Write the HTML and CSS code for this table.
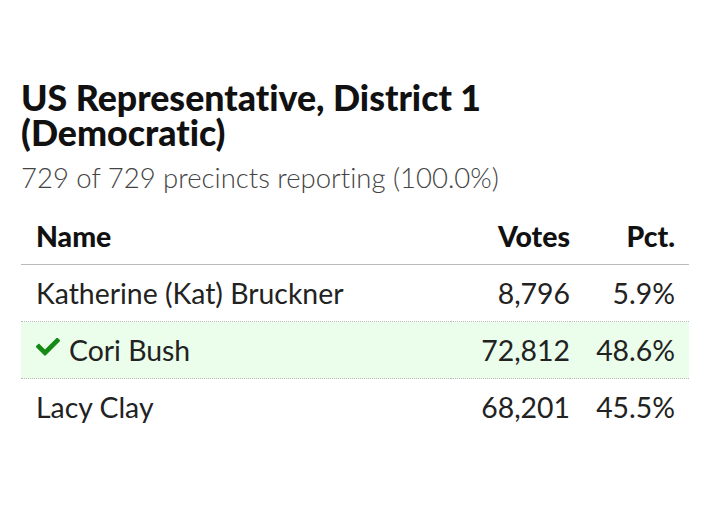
FILE: index.html
```html
<!DOCTYPE html>
<html>
<head>
<meta charset="utf-8">
<link rel="stylesheet" href="styles.css">
</head>
<body>
<div class="race">
  <h1 class="title">US Representative, District 1 (Democratic)</h1>
  <p class="reporting">729 of 729 precincts reporting (100.0%)</p>
  <table class="results">
    <thead>
      <tr><th class="name">Name</th><th class="num">Votes</th><th class="num pct">Pct.</th></tr>
    </thead>
    <tbody>
      <tr><td class="name">Katherine (Kat) Bruckner</td><td class="num">8,796</td><td class="num pct">5.9%</td></tr>
      <tr class="winner"><td class="name"><svg class="check" viewBox="0 72 512 378" width="24" height="18"><path fill="#138a13" d="M173.9 439.4L7.5 273c-10-10-10-26.2 0-36.2l36.2-36.2c10-10 26.2-10 36.2 0L192 312.7 432.1 72.6c10-10 26.2-10 36.2 0l36.2 36.2c10 10 10 26.2 0 36.2L210.1 439.4c-10 10-26.2 10-36.2 0z"/></svg>Cori Bush</td><td class="num">72,812</td><td class="num pct">48.6%</td></tr>
      <tr><td class="name">Lacy Clay</td><td class="num">68,201</td><td class="num pct">45.5%</td></tr>
    </tbody>
  </table>
</div>
</body>
</html>
```
FILE: styles.css
```css
html, body {
  margin: 0;
  padding: 0;
  background: #fff;
}
body {
  font-family: Lato, "Liberation Sans", sans-serif;
  font-variant-ligatures: none;
  color: #1a1a1a;
}
.race {
  width: 668px;
  margin-left: 21px;
  padding-top: 80px;
}
.title {
  margin: 0;
  font-size: 35.7px;
  line-height: 35px;
  font-weight: 900;
  color: #111;
  width: 560px;
}
.reporting {
  margin: 11px 0 0;
  font-size: 27.5px;
  line-height: 34px;
  font-weight: 300;
  color: #444;
}
.results {
  width: 100%;
  border-collapse: collapse;
  margin-top: 13px;
  font-size: 28.4px;
}
.results th {
  font-weight: 900;
  text-align: left;
  height: 56px;
  padding: 0 0 0 15px;
  border-bottom: 1px solid #bbb;
  color: #111;
}
.results td {
  height: 56px;
  padding: 0 0 0 15px;
  font-weight: 400;
  color: #222;
  border-top: 1px dotted #bbb;
}
.results tbody tr:first-child td {
  border-top: none;
}
.results .num {
  text-align: right;
  padding-left: 0;
}
.results .pct {
  width: 105px;
  padding-right: 14px;
}
.winner td {
  background: #ebfdeb;
  border-bottom: 1px dotted #bbb;
}
.check {
  vertical-align: 5px;
  margin-right: 9px;
}
```
